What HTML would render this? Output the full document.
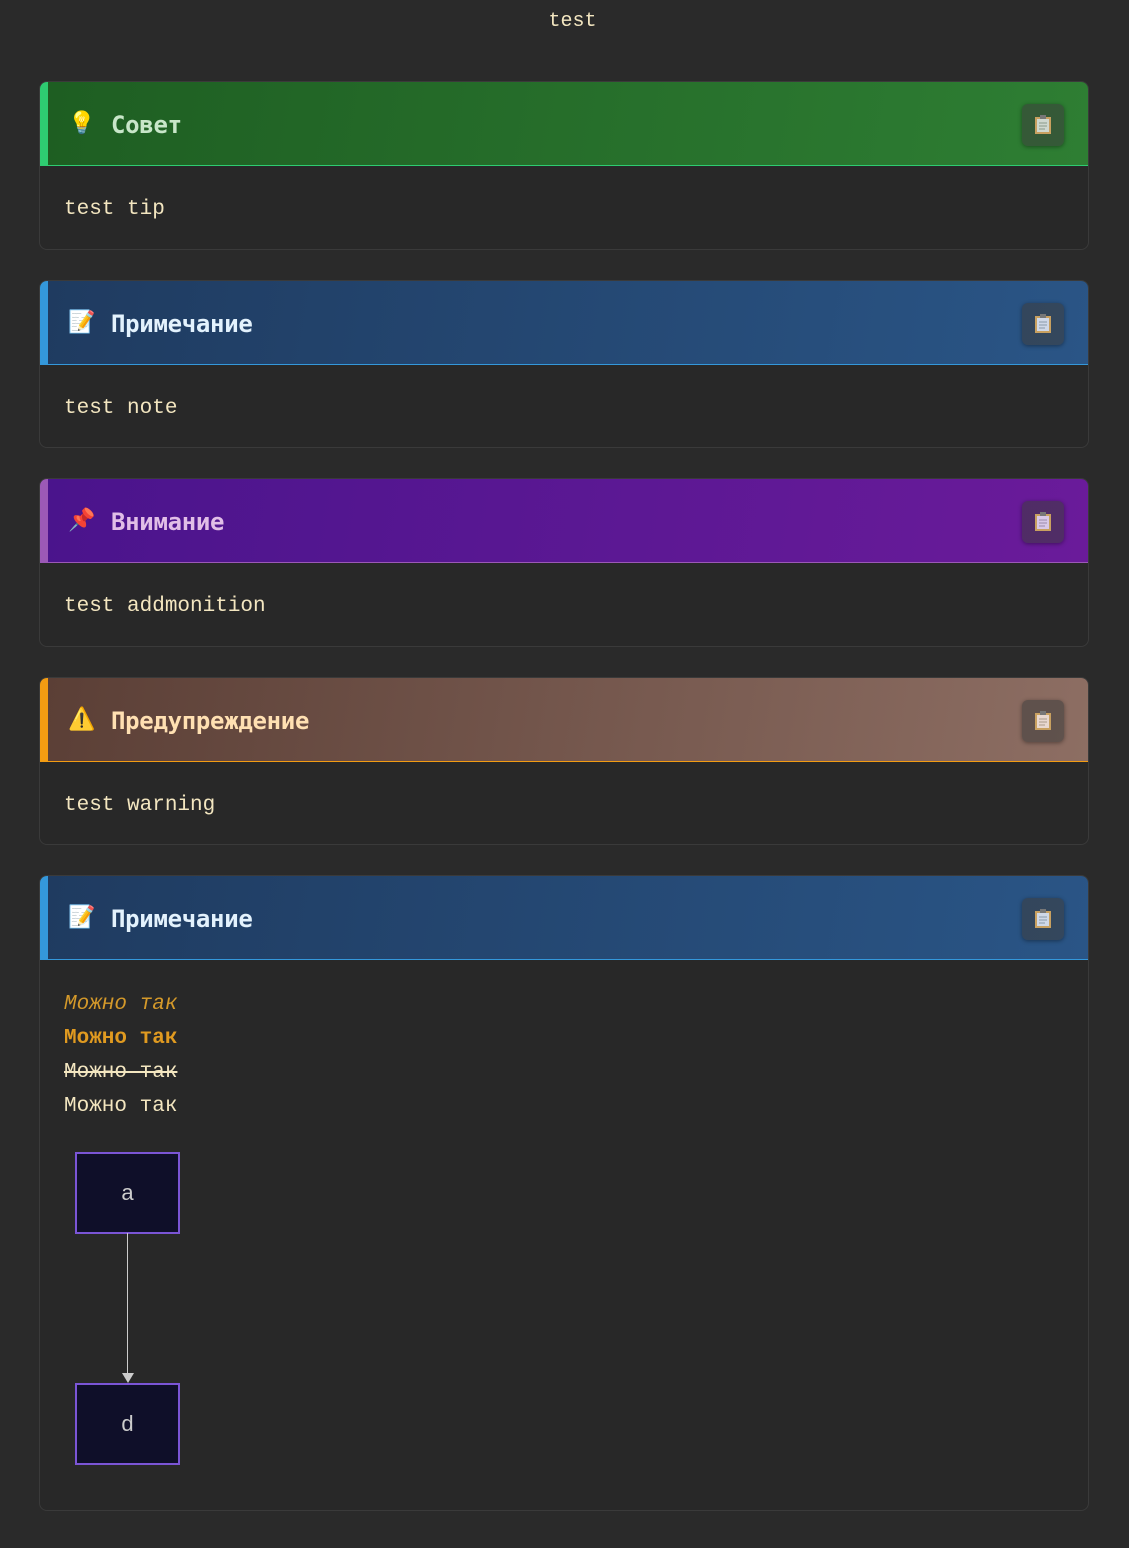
<!DOCTYPE html>
<html><head><meta charset="utf-8"><style>
body{margin:0;background:#2a2a2a;font-family:"Liberation Mono","DejaVu Sans Mono",monospace;color:#f3e6c0;width:1129px;height:1548px;overflow:hidden}
.t{position:absolute;top:10px;left:0;width:1145px;text-align:center;font-size:20px;color:#f3e6c0}
.card{position:absolute;left:39px;width:1048px;border:1px solid #3a3a3a;border-radius:8px;background:#282828;overflow:hidden}
.hd{height:84px;position:relative;border-left:8px solid;box-sizing:border-box;border-bottom:1px solid #333}
.hd .ic{position:absolute;left:20px;top:29px;font-size:22px;line-height:26px;font-family:"DejaVu Sans",sans-serif}
.hd .ti{position:absolute;left:63px;top:28px;font-size:24px;font-weight:bold;line-height:30px;font-family:"DejaVu Sans Mono","Liberation Mono",monospace;letter-spacing:-0.3px}
.cp{position:absolute;right:24px;top:22px;width:42px;height:42px;border-radius:6px;background:rgba(60,60,60,.55);box-shadow:0 1px 4px rgba(0,0,0,.4)}
.cp svg{position:absolute;left:12px;top:11px}
.bd{padding:29px 24px 25px;font-size:21px;line-height:30px}
.g .hd{background:linear-gradient(100deg,#1e5e22,#2e7e33);border-color:#2ecc71}.g .ti{color:#c8e6c9}
.b .hd{background:linear-gradient(100deg,#1f3b60,#2a5586);border-color:#3498db}.b .ti{color:#e3f2fd}
.p .hd{background:linear-gradient(100deg,#4a148c,#6a1b9a);border-color:#9b59b6}.p .ti{color:#e1bee7}
.o .hd{background:linear-gradient(100deg,#5b3f36,#8d6e63);border-color:#f39c12}.o .ti{color:#ffe0b2}
.box{position:absolute;left:35px;width:105px;height:82px;background:#0f0f29;border:2px solid #7b55d6;box-sizing:border-box;text-align:center;line-height:78px;font-size:22px;color:#ccc;font-family:"Liberation Sans",sans-serif}
</style></head><body>
<div class="t">test</div>

<div class="card g" style="top:81px;height:167px"><div class="hd"><span class="ic">💡</span><span class="ti">Совет</span><div class="cp"><svg width="18" height="20"><rect x="1" y="2" width="16" height="17" fill="#c8a060"/><rect x="3" y="4" width="12" height="13" fill="#cfd8cf"/><rect x="6" y="0" width="6" height="4" fill="#777"/><path d="M5 8h8M5 11h8M5 14h6" stroke="#8a9a8a"/></svg></div></div><div class="bd">test tip</div></div>

<div class="card b" style="top:280px;height:166px"><div class="hd"><span class="ic">📝</span><span class="ti">Примечание</span><div class="cp"><svg width="18" height="20"><rect x="1" y="2" width="16" height="17" fill="#c8a060"/><rect x="3" y="4" width="12" height="13" fill="#cfd8e8"/><rect x="6" y="0" width="6" height="4" fill="#777"/><path d="M5 8h8M5 11h8M5 14h6" stroke="#8a9aaa"/></svg></div></div><div class="bd">test note</div></div>

<div class="card p" style="top:478px;height:167px"><div class="hd"><span class="ic">📌</span><span class="ti">Внимание</span><div class="cp"><svg width="18" height="20"><rect x="1" y="2" width="16" height="17" fill="#c8a060"/><rect x="3" y="4" width="12" height="13" fill="#d8c8e8"/><rect x="6" y="0" width="6" height="4" fill="#777"/><path d="M5 8h8M5 11h8M5 14h6" stroke="#9a8aaa"/></svg></div></div><div class="bd">test addmonition</div></div>

<div class="card o" style="top:677px;height:166px"><div class="hd"><span class="ic">⚠️</span><span class="ti">Предупреждение</span><div class="cp"><svg width="18" height="20"><rect x="1" y="2" width="16" height="17" fill="#c8a060"/><rect x="3" y="4" width="12" height="13" fill="#e8d8d0"/><rect x="6" y="0" width="6" height="4" fill="#777"/><path d="M5 8h8M5 11h8M5 14h6" stroke="#aa9a8a"/></svg></div></div><div class="bd">test warning</div></div>

<div class="card b" style="top:875px;height:634px"><div class="hd"><span class="ic">📝</span><span class="ti">Примечание</span><div class="cp"><svg width="18" height="20"><rect x="1" y="2" width="16" height="17" fill="#c8a060"/><rect x="3" y="4" width="12" height="13" fill="#cfd8e8"/><rect x="6" y="0" width="6" height="4" fill="#777"/><path d="M5 8h8M5 11h8M5 14h6" stroke="#8a9aaa"/></svg></div></div>
<div class="bd" style="padding-top:28px;line-height:34px">
<div style="color:#d4992a;font-style:italic">Можно так</div>
<div style="color:#e09a20;font-weight:bold">Можно так</div>
<div style="text-decoration:line-through">Можно так</div>
<div>Можно так</div>
</div>
<div class="box" style="top:276px">a</div>
<div style="position:absolute;left:87px;top:357px;width:1px;height:140px;background:#ccc"></div>
<svg style="position:absolute;left:81px;top:496px" width="14" height="12"><path d="M1 1h12L7 11z" fill="#ccc"/></svg>
<div class="box" style="top:507px">d</div>
</div>
</body></html>
